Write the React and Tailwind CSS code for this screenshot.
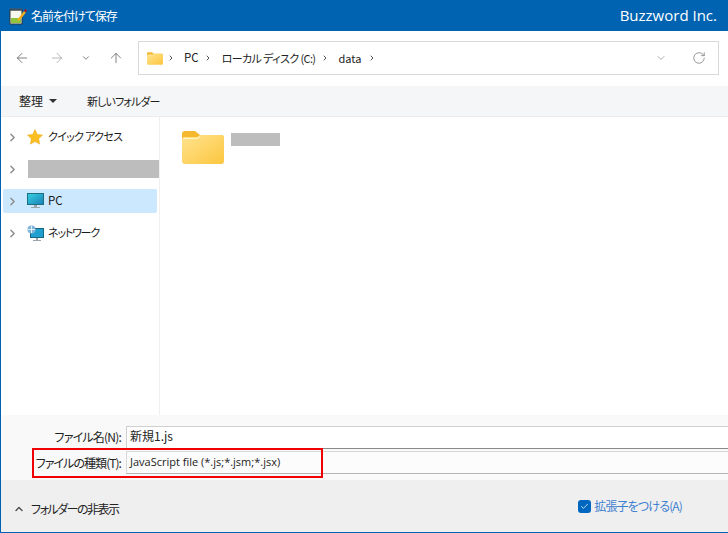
import React from 'react';
import { ArrowLeft, ArrowRight, ArrowUp, ChevronDown, ChevronRight, ChevronUp, RotateCw, Check } from 'lucide-react';

const FONT = 'font-["Noto_Sans_CJK_JP","Noto_Sans",sans-serif] [font-feature-settings:"palt"]';

function FolderIcon({ className }) {
  return (
    <svg viewBox="0 0 42 33" className={className}>
      <path d="M0 3a3 3 0 0 1 3-3h10l5 4h21a3 3 0 0 1 3 3v6H0z" fill="#f5b82e" />
      <path d="M0 9a3 3 0 0 1 3-3h12l3-2h21a3 3 0 0 1 3 3v23a3 3 0 0 1-3 3H3a3 3 0 0 1-3-3z" fill="url(#folderFill)" />
      <path d="M1 7h14l3-2v1l-3 2H1z" fill="#fff3c8" />
      <defs>
        <linearGradient id="folderFill" x1="0" y1="0" x2="1" y2="1">
          <stop offset="0" stopColor="#ffe38f" />
          <stop offset="1" stopColor="#fcc63f" />
        </linearGradient>
      </defs>
    </svg>
  );
}

function NotepadIcon() {
  return (
    <svg viewBox="0 0 18 18" className="w-[18px] h-[18px]">
      <rect x="1" y="3" width="12" height="14" fill="#f8f8ee" stroke="#333" strokeWidth="1" />
      <path d="M2 1v3M4 1v3M6 1v3M8 1v3M10 1v3M12 1v3" stroke="#555" strokeWidth="1" />
      <rect x="2" y="11" width="10" height="5" fill="#8bc53f" />
      <path d="M8 13L15 4l2 1.500L10 14z" fill="#f2b01e" />
      <path d="M15 4l1-2 2 1-1 2.500z" fill="#a01c1c" />
    </svg>
  );
}

function MonitorIcon() {
  return (
    <svg viewBox="0 0 17 16" className="w-[17px] h-[16px]">
      <rect x="0.500" y="0.500" width="16" height="11" fill="url(#screenFill)" stroke="#1d6f80" />
      <rect x="7" y="12" width="3" height="2" fill="#9aa5ab" />
      <rect x="4" y="14" width="9" height="1" fill="#9aa5ab" />
      <defs>
        <linearGradient id="screenFill" x1="0" y1="0" x2="1" y2="1">
          <stop offset="0" stopColor="#35d3e0" />
          <stop offset="1" stopColor="#1a7fb8" />
        </linearGradient>
      </defs>
    </svg>
  );
}

function NetworkIcon() {
  return (
    <svg viewBox="0 0 17 17" className="w-[17px] h-[17px]">
      <rect x="3.500" y="3.500" width="13" height="9" fill="#1f9ed0" stroke="#17667f" />
      <rect x="9" y="13" width="2" height="2" fill="#9aa5ab" />
      <rect x="6" y="15" width="8" height="1" fill="#9aa5ab" />
      <circle cx="4.500" cy="4.500" r="4" fill="#7fb4d8" />
      <path d="M1 4.500h7M4.500 1v7" stroke="#dff0fa" strokeWidth="1" />
    </svg>
  );
}

function NavItem({ icon, label, selected, labelClass }) {
  return (
    <div className={`flex items-center h-[24px] ml-[2px] w-[154px] rounded-[2px] ${selected ? 'bg-[#cce8ff]' : ''}`}>
      <ChevronRight className="w-[13px] h-[13px] ml-[3px] text-[#8a8a8a]" strokeWidth={2.5} />
      <div className="w-[20px] ml-[6px] flex justify-center">{icon}</div>
      <span className={`ml-[3px] pb-[1px] text-[#1a1a1a] ${labelClass}`}>{label}</span>
    </div>
  );
}

export default function App() {
  return (
    <div className={`w-[728px] h-[533px] flex flex-col overflow-hidden bg-white relative ${FONT}`}>
      {/* Title bar */}
      <div className="h-[31px] shrink-0 bg-[#0063b1] flex items-center text-white pl-[9px] pr-[11px]">
        <NotepadIcon />
        <span className="ml-[4px] text-[12px] tracking-[-1px]">名前を付けて保存</span>
        <span className="ml-auto text-[15px] font-['Open_Sans',sans-serif] font-medium">Buzzword Inc.</span>
      </div>

      <div className="flex-1 flex flex-col border-l border-b border-[#0063b1] min-h-0">
        {/* Navigation row */}
        <div className="h-[55px] shrink-0 flex items-center pl-[13px] pb-[1px]">
          <ArrowLeft className="w-[16px] h-[16px] text-[#6b6b6b]" strokeWidth={1.25} />
          <ArrowRight className="ml-[19px] w-[16px] h-[16px] text-[#a8a8a8]" strokeWidth={1.25} />
          <ChevronDown className="ml-[16px] w-[10px] h-[10px] text-[#6b6b6b]" strokeWidth={2} />
          <ArrowUp className="ml-[17px] w-[16px] h-[16px] text-[#6b6b6b]" strokeWidth={1.25} />
          <div className="ml-[14px] w-[581px] h-[34px] border border-[#d9d9d9] flex items-center pl-[8px] text-[12px] text-[#222]">
            <FolderIcon className="w-[16px] h-[13px]" />
            <ChevronRight className="ml-[4px] w-[8px] h-[8px] text-[#555]" strokeWidth={3} />
            <span className="ml-[9px] text-[11.5px]">PC</span>
            <ChevronRight className="ml-[5px] w-[8px] h-[8px] text-[#555]" strokeWidth={3} />
            <span className="ml-[10px] text-[11px] tracking-[-0.6px]">ローカル ディスク (C:)</span>
            <ChevronRight className="ml-[5px] w-[8px] h-[8px] text-[#555]" strokeWidth={3} />
            <span className="ml-[10px] text-[11px]">data</span>
            <ChevronRight className="ml-[7px] w-[8px] h-[8px] text-[#555]" strokeWidth={3} />
            <ChevronDown className="ml-auto w-[12px] h-[12px] text-[#777]" strokeWidth={1.25} />
            <RotateCw className="ml-[25px] mr-[12px] w-[14px] h-[14px] text-[#777]" strokeWidth={1.25} />
          </div>
        </div>

        {/* Toolbar */}
        <div className="h-[31px] shrink-0 bg-[#f5f6f7] border-b border-[#ececec] flex items-center pl-[18px] text-[12px] text-[#222]">
          <span>整理</span>
          <span className="ml-[6px] w-0 h-0 border-x-[4px] border-x-transparent border-t-[4px] border-t-[#333]" />
          <span className="ml-[30px] text-[11px] tracking-[-0.9px]">新しいフォルダー</span>
        </div>

        {/* Main area */}
        <div className="flex-1 flex min-h-0">
          <div className="w-[159px] shrink-0 border-r border-[#f0f0f0] pt-[8px] flex flex-col gap-[8px]">
            <NavItem
              label="クイック アクセス"
              labelClass="text-[11px] tracking-[-0.7px]"
              icon={
                <svg viewBox="0 0 16 16" className="w-[16px] h-[16px]">
                  <path d="M8 .5l2.300 4.900 5.200.7-3.800 3.700.9 5.300L8 12.600 3.400 15.100l.9-5.300L.5 6.100l5.200-.7z" fill="#fbbf24" stroke="#e9a70e" strokeWidth="0.500" />
                </svg>
              }
            />
            <div className="flex items-center h-[24px] ml-[2px]">
              <ChevronRight className="w-[13px] h-[13px] ml-[3px] text-[#8a8a8a]" strokeWidth={2.5} />
              <div className="ml-[9px] w-[131px] h-[18px] bg-[#bdbdbd]" />
            </div>
            <NavItem label="PC" labelClass="text-[11.5px]" selected icon={<MonitorIcon />} />
            <NavItem label="ネットワーク" labelClass="text-[11px] tracking-[-1.200px]" icon={<NetworkIcon />} />
          </div>
          <div className="flex-1 flex items-start pt-[14px] pl-[22px]">
            <FolderIcon className="w-[42px] h-[33px]" />
            <div className="ml-[7px] mt-[2px] w-[49px] h-[13px] bg-[#bdbdbd]" />
          </div>
        </div>

        {/* File name and type */}
        <div className="h-[65px] shrink-0 bg-[#f9f9f9] pt-[11px] flex flex-col gap-[2px] text-[12px] text-[#222]">
          <div className="flex items-center h-[23px]">
            <span className="w-[120px] text-right tracking-[-0.8px] pb-[2px]">ファイル名(N):</span>
            <div className="ml-[5px] flex-1 h-[23px] bg-white border border-[#d0d0d0] border-b-[#8a8a8a] border-r-0 flex items-center pl-[3px] pb-[3px]">新規1.js</div>
          </div>
          <div className="flex items-center h-[23px]">
            <span className="w-[120px] text-right tracking-[-0.95px]">ファイルの種類(T):</span>
            <div className="ml-[5px] flex-1 h-[23px] bg-[#fcfcfc] border border-[#d8d8d8] border-b-[#b5b5b5] border-r-0 flex items-center pl-[3px] font-['Open_Sans',sans-serif] text-[11px]">JavaScript file (*.js;*.jsm;*.jsx)</div>
          </div>
        </div>

        {/* Footer */}
        <div className="h-[52px] shrink-0 bg-[#efefef] flex items-start pt-[20px] pl-[12px] text-[12px]">
          <ChevronUp className="w-[12px] h-[12px] mt-[3px] text-[#444]" strokeWidth={2.5} />
          <span className="ml-[6px] text-[#222] tracking-[-1.5px]">フォルダーの非表示</span>
          <div className="ml-auto mr-[46px] flex items-center mt-[-3px]">
            <span className="w-[13px] h-[13px] rounded-[3px] bg-[#0067c0] flex items-center justify-center">
              <Check className="w-[9px] h-[9px] text-white" strokeWidth={2} />
            </span>
            <span className="ml-[3px] text-[#3f7fd0] tracking-[-0.85px]">拡張子をつける(A)</span>
          </div>
        </div>
      </div>

      {/* Red highlight annotation */}
      <div className="absolute left-[32px] top-[448px] w-[291px] h-[30px] border-2 border-[#f00000]" />
    </div>
  );
}
